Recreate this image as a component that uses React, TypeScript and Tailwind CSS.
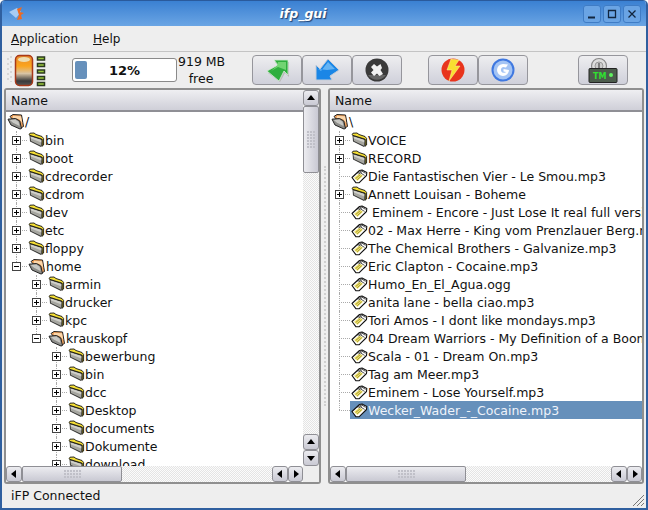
import type { ReactNode } from "react";

type TreeNode = {
  label: string;
  kind?: "folder" | "open" | "file";
  expander?: "plus" | "minus";
  selected?: boolean;
  children?: TreeNode[];
};

const dir = (label: string): TreeNode => ({ label, expander: "plus" });
const song = (label: string, selected = false): TreeNode => ({ label, kind: "file", selected });

const leftTree: TreeNode[] = [
  dir("bin"),
  dir("boot"),
  dir("cdrecorder"),
  dir("cdrom"),
  dir("dev"),
  dir("etc"),
  dir("floppy"),
  {
    label: "home",
    kind: "open",
    expander: "minus",
    children: [
      dir("armin"),
      dir("drucker"),
      dir("kpc"),
      {
        label: "krauskopf",
        kind: "open",
        expander: "minus",
        children: [
          dir("bewerbung"),
          dir("bin"),
          dir("dcc"),
          dir("Desktop"),
          dir("documents"),
          dir("Dokumente"),
          dir("download"),
        ],
      },
    ],
  },
];

const rightTree: TreeNode[] = [
  dir("VOICE"),
  dir("RECORD"),
  song("Die Fantastischen Vier - Le Smou.mp3"),
  dir("Annett Louisan - Boheme"),
  song(" Eminem - Encore - Just Lose It real full version.mp3"),
  song("02 - Max Herre - King vom Prenzlauer Berg.mp3"),
  song("The Chemical Brothers - Galvanize.mp3"),
  song("Eric Clapton - Cocaine.mp3"),
  song("Humo_En_El_Agua.ogg"),
  song("anita lane - bella ciao.mp3"),
  song("Tori Amos - I dont like mondays.mp3"),
  song("04 Dream Warriors - My Definition of a Boombastic Jazz Style.mp3"),
  song("Scala - 01 - Dream On.mp3"),
  song("Tag am Meer.mp3"),
  song("Eminem - Lose Yourself.mp3"),
  song("Wecker_Wader_-_Cocaine.mp3", true),
];

const FolderIcon = () => (
  <svg width="17" height="16" viewBox="0 0 17 16" className="shrink-0">
    <path d="M1.5 3 L14.8 7 L15 13 L13 15 L2 9.5 Z" fill="#3a3a38" />
    <path d="M2.5 4.5 L13.5 8 L13.5 14 L3 9 Z" fill="#a6a6a0" />
    <path d="M2.5 4.5 L13.5 8 L13.5 10.5 L3 6.5 Z" fill="#d0d0ca" />
    <path d="M1 2.5 L2 1.2 L6 1 L8 2.5 L14 4.5 L15.6 6.5 L15.6 13 L14.2 14.2 L14.2 7.2 L2 3.4 Z" fill="#f4de34" stroke="#111" strokeWidth="0.9" strokeLinejoin="round" />
  </svg>
);

const OpenFolderIcon = () => (
  <svg width="18" height="17" viewBox="0 0 18 17" className="shrink-0">
    <path d="M3 3.5 L6 1.5 L14.5 2 L16.5 13.5 L13.5 15 Z" fill="#f2a45e" stroke="#222" strokeWidth="1" strokeLinejoin="round" />
    <path d="M6 3 L14 3.3 L15.3 10 L12 6 L6 5 Z" fill="#fcd8ac" />
    <path d="M1 6.2 L8.5 5.5 L12.8 8 L14.5 15.5 L13 16 L4 12 Z" fill="#8e8e8a" stroke="#222" strokeWidth="1" strokeLinejoin="round" />
    <path d="M2.8 7 L8.3 6.6 L11.5 8.8 L12.6 13 L6 9.8 Z" fill="#c8c8c4" />
  </svg>
);

const FileIcon = () => (
  <svg width="17" height="15" viewBox="0 0 17 15" className="shrink-0">
    <path d="M1 8.5 L8.5 1.5 L11 1 L15.8 3.5 L15.5 6.5 L8 13.8 L5 13.8 Z" fill="#ffffff" stroke="#111" strokeWidth="1.1" strokeLinejoin="round" />
    <path d="M3 8.8 L8.6 4.6 L12 6.8 L6.4 12 Z" fill="#f2e468" />
    <path d="M4.6 9.6 L9.4 5.6 M6.2 10.8 L10.8 6.6" stroke="#8a8030" strokeWidth="0.8" />
    <path d="M6.6 4.4 L10.4 1.8 L14.6 4.4 M7.6 5 L11 2.8 M9.6 4 L13.6 6.4" fill="none" stroke="#222" strokeWidth="0.8" />
  </svg>
);

const Expander = ({ type }: { type: "plus" | "minus" }) => (
  <span className="absolute left-[-4px] top-[5px] z-10 flex h-[9px] w-[9px] items-center justify-center border border-[#444] bg-white">
    <svg width="5" height="5" viewBox="0 0 5 5">
      <path d={type === "plus" ? "M0 2.5H5M2.5 0V5" : "M0 2.5H5"} stroke="#000" strokeWidth="1" />
    </svg>
  </span>
);

const Branch = ({ node, last }: { node: TreeNode; last: boolean }) => (
  <div className="relative">
    <span className={`absolute left-0 top-0 w-px border-l border-dotted border-[#aaa] ${last ? "h-[9px]" : "h-full"}`} />
    <div className="relative flex h-[18px] items-center">
      <span className="h-0 w-[11px] shrink-0 border-t border-dotted border-[#aaa]" />
      {node.expander && <Expander type={node.expander} />}
      <div className={`flex h-full flex-1 items-center pl-px ${node.selected ? "bg-[#6690bb] text-[#eef3fa]" : ""}`}>
        {node.kind === "file" ? <FileIcon /> : node.kind === "open" ? <OpenFolderIcon /> : <FolderIcon />}
        <span className="whitespace-pre pt-[2px]">{node.label}</span>
      </div>
    </div>
    {node.children && (
      <div className="ml-[20px]">
        {node.children.map((c, i) => (
          <Branch key={c.label} node={c} last={i === node.children!.length - 1} />
        ))}
      </div>
    )}
  </div>
);

const ScrollBtn = ({ dir, className = "" }: { dir: "up" | "down" | "left" | "right"; className?: string }) => {
  const pts = {
    up: "1,7 5,2 9,7",
    down: "1,3 9,3 5,8",
    left: "7,1 7,9 2,5",
    right: "3,1 3,9 8,5",
  }[dir];
  return (
    <div className={`flex items-center justify-center rounded-[3px] border border-[#8f8f95] bg-gradient-to-b from-[#ececf0] to-[#c9c9d3] ${className}`}>
      <svg width="10" height="10" viewBox="0 0 10 10">
        <polygon points={pts} fill="#000" />
      </svg>
    </div>
  );
};

const Grip = ({ cols, rows }: { cols: number; rows: number }) => (
  <div className="grid gap-px" style={{ gridTemplateColumns: `repeat(${cols}, 2px)` }}>
    {Array.from({ length: cols * rows }).map((_, i) => (
      <span key={i} className="h-[2px] w-[2px] bg-[#c0c0c8]" />
    ))}
  </div>
);

const track = "bg-[repeating-conic-gradient(#e4e4e4_0_25%,#fbfbfb_0_50%)] bg-[length:2px_2px]";

const HScroll = ({ thumb }: { thumb: string }) => (
  <div className="flex h-[16px] shrink-0 items-stretch">
    <ScrollBtn dir="left" className="w-[16px] shrink-0" />
    <div className={`flex min-w-0 flex-1 ${track}`}>
      <div className={`flex items-center justify-center rounded-[2px] border border-[#8f8f95] bg-gradient-to-b from-[#ececf0] to-[#c9c9d3] ${thumb}`}>
        <Grip cols={6} rows={3} />
      </div>
    </div>
    <ScrollBtn dir="left" className="w-[16px] shrink-0" />
    <ScrollBtn dir="right" className="w-[15px] shrink-0" />
  </div>
);

const Header = () => (
  <div className="flex h-[22px] shrink-0 items-center border-b-2 border-[#8f8f95] bg-gradient-to-b from-[#efeff2] to-[#cfcfd8] pl-[5px] pt-[2px]">
    Name
  </div>
);

const Pane = ({ className, children }: { className: string; children: ReactNode }) => (
  <div className={`flex flex-col overflow-hidden rounded-[3px] border-2 border-[#8f8f8f] bg-white ${className}`}>
    {children}
  </div>
);

const ToolBtn = ({ children, className = "" }: { children: ReactNode; className?: string }) => (
  <div className={`flex h-[30px] w-[50px] items-center justify-center rounded-[4px] border border-[#96969c] bg-gradient-to-b from-[#eeeef0] to-[#cfd0da] ${className}`}>
    {children}
  </div>
);

const WinBtn = ({ children }: { children: ReactNode }) => (
  <div className="flex h-[18px] w-[18px] items-center justify-center rounded-[3px] border border-[#3f7cc5] bg-[#6aa4e4]">
    <svg width="12" height="12" viewBox="0 0 12 12" fill="none" stroke="#12263f" strokeWidth="1.3">
      {children}
    </svg>
  </div>
);

export default function App() {
  return (
    <div className="flex h-[510px] w-[648px] flex-col overflow-hidden rounded-t-[5px] border-x-2 border-b-2 border-[#2f5f9f] bg-[#eeeeee] font-['DejaVu_Sans',sans-serif] text-[12.5px] leading-none text-[#111]">
      {/* title bar */}
      <div className="relative flex h-[26px] shrink-0 items-center justify-between border-t border-[#2a5a9c] bg-gradient-to-b from-[#3a80d2] to-[#6aa5e4] pl-[6px] pr-[5px]">
        <svg width="18" height="16" viewBox="0 0 18 16">
          <path d="M1 6 L9 2 L13 6 L8 12 Z" fill="#a8ccf4" />
          <path d="M9 3 L14 1 L12 6 L16 7 L13 9 L14 13 L9 14 L11 9 Z" fill="#ee6a22" />
        </svg>
        <span className="ml-[-3px] pt-px font-bold italic text-white [text-shadow:1px_1px_1px_#1c3f70]">ifp_gui</span>
        <div className="flex gap-[2px]">
          <WinBtn><path d="M2 9.5H9" strokeWidth="2" /></WinBtn>
          <WinBtn><path d="M2.5 2.5H9.5V9.5H2.5Z" /></WinBtn>
          <WinBtn><path d="M2.5 2.5L9.5 9.5M9.5 2.5L2.5 9.5" /></WinBtn>
        </div>
      </div>

      {/* menu */}
      <div className="flex h-[26px] shrink-0 items-center gap-[15px] border-b border-[#c4c4c4] pl-[9px] pt-px text-[12px]">
        <span><u>A</u>pplication</span>
        <span><u>H</u>elp</span>
      </div>

      {/* toolbar */}
      <div className="flex h-[36px] shrink-0 items-center">
        <div className="ml-[5px] flex w-[40px] items-center">
          <svg width="40" height="33" viewBox="0 0 40 33">
            <defs>
              <linearGradient id="bat" x1="0" y1="0" x2="0" y2="1">
                <stop offset="0" stopColor="#e88a30" />
                <stop offset="0.35" stopColor="#fba41c" />
                <stop offset="0.6" stopColor="#d8c4a4" />
                <stop offset="0.85" stopColor="#3a3a3a" />
                <stop offset="1" stopColor="#555" />
              </linearGradient>
            </defs>
            <path d="M1 4v24M4 2v26" stroke="#cfcfcf" strokeWidth="1.5" strokeDasharray="2 3" />
            <rect x="8.5" y="1.5" width="17" height="30" rx="4" fill="url(#bat)" stroke="#a83818" strokeWidth="1.5" />
            <ellipse cx="17" cy="5.5" rx="6" ry="2.5" fill="#eeddb0" />
            <g fill="#9ac83c" stroke="#2c3a20" strokeWidth="1.5">
              <rect x="30.5" y="3" width="7" height="3" />
              <rect x="30.5" y="9.5" width="7" height="3" />
              <rect x="30.5" y="16" width="7" height="3" />
              <rect x="30.5" y="22.5" width="7" height="3" />
              <rect x="30.5" y="28.5" width="7" height="3" />
            </g>
          </svg>
        </div>
        <div className="ml-[25px] flex h-[24px] w-[105px] items-center rounded-[3px] border border-[#8a8a8a] bg-white p-[2px]">
          <div className="relative flex h-full w-full items-center justify-center">
            <div className="absolute inset-y-0 left-0 w-[12px] rounded-[2px] bg-[#6690bb]" />
            <span className="relative text-[13px] font-bold">12%</span>
          </div>
        </div>
        <div className="ml-px w-[46px] whitespace-nowrap text-center leading-[17px]">919 MB<br />free</div>

        <div className="ml-[28px] flex gap-0">
          <ToolBtn>
            <svg width="24" height="24" viewBox="0 0 24 24">
              <polygon points="10,4 24,4 24,19 20,15 15,24 3,15 14,9" fill="#b8b8b8" />
              <polygon points="9,2 23,2 23,17 19,13 14,23 2,13 13,7" fill="#2fae3e" stroke="#d4eed4" strokeWidth="0.8" />
              <polygon points="13,4 21,4 21,12 13,9 6,13 12,8" fill="#72d472" />
            </svg>
          </ToolBtn>
          <ToolBtn>
            <svg width="24" height="24" viewBox="0 0 24 24">
              <polygon points="1,22 1,7 5,11 13,1 24,12 15,18 17,22" fill="#1a86e6" stroke="#c4ccd8" strokeWidth="1" />
              <polygon points="3,11 6,13 13,4 20,11 12,12" fill="#64b4f4" />
            </svg>
          </ToolBtn>
          <ToolBtn>
            <svg width="24" height="24" viewBox="0 0 24 24">
              <circle cx="12" cy="12" r="11.5" fill="#3a3a3a" />
              <path d="M3 17 A11 11 0 0 0 21 17 Z" fill="#666" />
              <path d="M9 6 L12 8.5 L15.5 6 L17 10 L15.5 12 L18 16 L14.5 18 L12 15.5 L9 18 L6 14.5 L8.5 12 L6 9 Z" fill="#f2f2f2" />
            </svg>
          </ToolBtn>
        </div>
        <div className="ml-[26px] flex">
          <ToolBtn>
            <svg width="24" height="24" viewBox="0 0 24 24">
              <circle cx="12" cy="12" r="11.5" fill="#e8341c" />
              <path d="M10 1 L18 2 L14 8 L19 8 L8 23 L11 12 L6 12 Z" fill="#f8e030" stroke="#fff0a0" strokeWidth="0.5" />
            </svg>
          </ToolBtn>
          <ToolBtn>
            <svg width="24" height="24" viewBox="0 0 24 24">
              <circle cx="12" cy="12" r="11.5" fill="#3f78e0" />
              <circle cx="12" cy="12" r="9.5" fill="#a4c4f4" />
              <path d="M17 6.5 L12 6 A6 6 0 1 0 18 12 L12.5 11 L12.5 13.5 L15 14 A3 3 0 1 1 12 9 L15 9.5 Z" fill="#fff" />
            </svg>
          </ToolBtn>
        </div>
        <ToolBtn className="ml-[50px]">
          <svg width="30" height="26" viewBox="0 0 30 26">
            <circle cx="11" cy="9" r="7.5" fill="#ddd" stroke="#888" strokeWidth="1.2" />
            <circle cx="11" cy="9" r="4" fill="#ccc" stroke="#999" />
            <path d="M11 6v6" stroke="#333" />
            <rect x="1" y="11.5" width="28" height="14" rx="1" fill="#4c5c4c" stroke="#222" />
            <text x="5" y="22" fill="#30e030" fontSize="8" fontWeight="bold">TM</text>
            <circle cx="23" cy="18" r="2" fill="#60f060" />
          </svg>
        </ToolBtn>
      </div>

      {/* panes */}
      <div className="flex min-h-0 flex-1 pl-[2px] pr-[2px]">
        <Pane className="w-[317px] shrink-0">
          <div className="flex min-h-0 flex-1">
            <div className="flex min-w-0 flex-1 flex-col">
              <Header />
              <div className="min-h-0 flex-1 overflow-hidden">
                <div className="flex h-[19px] items-center pl-px">
                  <OpenFolderIcon />
                  <span className="pt-[2px]">/</span>
                </div>
                <div className="ml-[10px]">
                  {leftTree.map((n, i) => (
                    <Branch key={n.label} node={n} last={i === leftTree.length - 1} />
                  ))}
                </div>
              </div>
              <HScroll thumb="w-[100px]" />
            </div>
            <div className="flex w-[16px] shrink-0 flex-col bg-[#eeeeee]">
              <ScrollBtn dir="up" className="h-[16px] shrink-0" />
              <div className={`min-h-0 flex-1 ${track}`}>
                <div className="flex h-[67px] items-center justify-center rounded-[2px] border border-[#8f8f95] bg-gradient-to-r from-[#ececf0] to-[#c9c9d3]">
                  <Grip cols={3} rows={6} />
                </div>
              </div>
              <ScrollBtn dir="up" className="h-[16px] shrink-0" />
              <ScrollBtn dir="down" className="h-[16px] shrink-0" />
              <div className="h-[16px] shrink-0" />
            </div>
          </div>
        </Pane>

        {/* splitter */}
        <div className="flex w-[7px] shrink-0 items-center justify-center">
          <span className="h-[240px] w-0 border-l-2 border-dotted border-[#cfcfcf]" />
        </div>

        <Pane className="min-w-0 flex-1">
          <Header />
          <div className="min-h-0 flex-1 overflow-hidden">
            <div className="flex h-[19px] items-center pl-px">
              <OpenFolderIcon />
              <span className="pt-[2px]">\</span>
            </div>
            <div className="ml-[9px]">
              {rightTree.map((n, i) => (
                <Branch key={n.label} node={n} last={i === rightTree.length - 1} />
              ))}
            </div>
          </div>
          <HScroll thumb="w-[120px]" />
        </Pane>
      </div>

      {/* status bar */}
      <div className="relative flex h-[24px] shrink-0 items-center pl-[9px]">
        iFP Connected
        <svg width="14" height="14" viewBox="0 0 14 14" className="absolute bottom-[1px] right-[1px]" stroke="#777">
          <path d="M13 2L2 13M13 6L6 13M13 10L10 13" />
        </svg>
      </div>
    </div>
  );
}
